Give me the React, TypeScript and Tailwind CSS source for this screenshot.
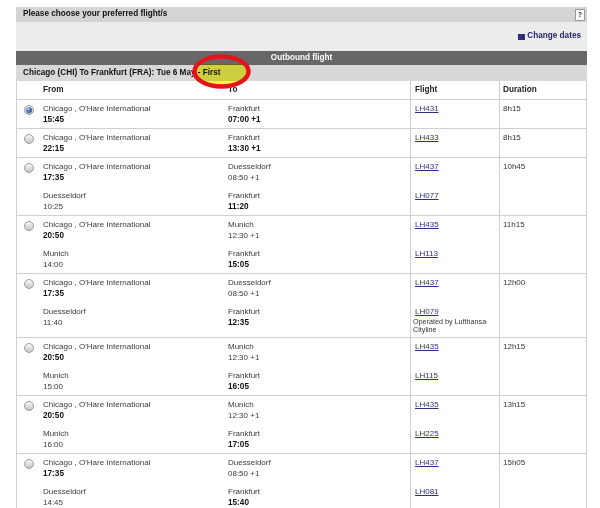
import React from "react";

type Seg = {
  from: string;
  dep: string;
  depBold?: boolean;
  to: string;
  arr: string;
  arrBold?: boolean;
  flight: string;
  operated?: string;
};

type Row = { selected?: boolean; segs: Seg[]; dur: string };

const CHI = "Chicago , O'Hare International";

const rows: Row[] = [
  {
    selected: true,
    segs: [{ from: CHI, dep: "15:45", depBold: true, to: "Frankfurt", arr: "07:00 +1", arrBold: true, flight: "LH431" }],
    dur: "8h15",
  },
  {
    segs: [{ from: CHI, dep: "22:15", depBold: true, to: "Frankfurt", arr: "13:30 +1", arrBold: true, flight: "LH433" }],
    dur: "8h15",
  },
  {
    segs: [
      { from: CHI, dep: "17:35", depBold: true, to: "Duesseldorf", arr: "08:50 +1", flight: "LH437" },
      { from: "Duesseldorf", dep: "10:25", to: "Frankfurt", arr: "11:20", arrBold: true, flight: "LH077" },
    ],
    dur: "10h45",
  },
  {
    segs: [
      { from: CHI, dep: "20:50", depBold: true, to: "Munich", arr: "12:30 +1", flight: "LH435" },
      { from: "Munich", dep: "14:00", to: "Frankfurt", arr: "15:05", arrBold: true, flight: "LH113" },
    ],
    dur: "11h15",
  },
  {
    segs: [
      { from: CHI, dep: "17:35", depBold: true, to: "Duesseldorf", arr: "08:50 +1", flight: "LH437" },
      {
        from: "Duesseldorf",
        dep: "11:40",
        to: "Frankfurt",
        arr: "12:35",
        arrBold: true,
        flight: "LH079",
        operated: "Operated by Lufthansa Cityline",
      },
    ],
    dur: "12h00",
  },
  {
    segs: [
      { from: CHI, dep: "20:50", depBold: true, to: "Munich", arr: "12:30 +1", flight: "LH435" },
      { from: "Munich", dep: "15:00", to: "Frankfurt", arr: "16:05", arrBold: true, flight: "LH115" },
    ],
    dur: "12h15",
  },
  {
    segs: [
      { from: CHI, dep: "20:50", depBold: true, to: "Munich", arr: "12:30 +1", flight: "LH435" },
      { from: "Munich", dep: "16:00", to: "Frankfurt", arr: "17:05", arrBold: true, flight: "LH225" },
    ],
    dur: "13h15",
  },
  {
    segs: [
      { from: CHI, dep: "17:35", depBold: true, to: "Duesseldorf", arr: "08:50 +1", flight: "LH437" },
      { from: "Duesseldorf", dep: "14:45", to: "Frankfurt", arr: "15:40", arrBold: true, flight: "LH081" },
    ],
    dur: "15h05",
  },
];

function Radio({ selected }: { selected?: boolean }) {
  return (
    <div className="flex h-[10px] w-[10px] items-center justify-center rounded-full border border-[#9c9c9c] bg-linear-to-b from-[#f7f7f7] to-[#c6c6c6]">
      {selected && (
        <div className="h-[6px] w-[6px] rounded-full bg-radial-[at_35%_30%] from-[#a9cdf3] via-[#3d6fb5] to-[#1b3f7a]" />
      )}
    </div>
  );
}

function TwoLine({ top, bottom, bold }: { top: string; bottom: string; bold?: boolean }) {
  return (
    <div className="leading-[11px]">
      <div className="text-[#3a3a3a]">{top}</div>
      <div className={bold ? "font-bold text-[8.2px] text-[#111]" : "text-[#3a3a3a]"}>{bottom}</div>
    </div>
  );
}

export default function App() {
  const grid = "grid grid-cols-[24px_185px_184px_89px_87px]";
  return (
    <div className="relative h-[508px] w-[600px] overflow-hidden bg-white font-['Liberation_Sans',Arial,sans-serif] text-[8px] text-[#333]">
      <div className="pl-[16px] pt-[7px]">
        <div className="w-[571px]">
          {/* Title bar */}
          <div className="flex h-[15px] items-center justify-between bg-[#d4d4d4] pl-[7px] pr-[2px]">
            <span className="text-[8.2px] font-bold text-[#111]">Please choose your preferred flight/s</span>
            <span className="flex h-[12px] w-[10px] items-center justify-center border border-[#9a9a9a] bg-white text-[7px] font-bold leading-none text-[#2e2e7a]">
              ?
            </span>
          </div>
          {/* Change dates area */}
          <div className="flex h-[29px] items-center justify-end bg-[#ececec] pr-[6px]">
            <span className="mr-[2px] h-[6px] w-[7px] bg-[#2e2e7a]" />
            <span className="text-[8.2px] font-bold text-[#23236b]">Change dates</span>
          </div>
          {/* Outbound flight bar */}
          <div className="flex h-[14px] items-center justify-center bg-[#676767] text-[8.2px] font-bold text-white">
            Outbound flight
          </div>
          {/* Sub header */}
          <div className="flex h-[16px] items-center bg-[#d8d8d8] pl-[7px] text-[8.2px] font-bold text-[#111]">
            Chicago (CHI) To Frankfurt (FRA): Tue 6 May - First
          </div>
          {/* Table */}
          <div className="border-x border-[#cfcfcf]">
            <div className={`${grid} h-[19px] border-b border-[#cfcfcf] text-[8.2px] font-bold text-[#222]`}>
              <div />
              <div className="flex items-center pl-[2px]">From</div>
              <div className="flex items-center pl-[2px]">To</div>
              <div className="flex items-center border-l border-[#cfcfcf] pl-[4px]">Flight</div>
              <div className="flex items-center border-l border-[#cfcfcf] pl-[3px]">Duration</div>
            </div>
            {rows.map((r, i) => (
              <div key={i} className={`${grid} border-b border-[#cfcfcf]`}>
                <div className="flex justify-center pt-[5px]">
                  <Radio selected={r.selected} />
                </div>
                <div className="flex flex-col gap-[7px] pb-[3px] pl-[2px] pt-[3px]">
                  {r.segs.map((s, j) => (
                    <TwoLine key={j} top={s.from} bottom={s.dep} bold={s.depBold} />
                  ))}
                </div>
                <div className="flex flex-col gap-[7px] pb-[3px] pl-[2px] pt-[3px]">
                  {r.segs.map((s, j) => (
                    <TwoLine key={j} top={s.to} bottom={s.arr} bold={s.arrBold} />
                  ))}
                </div>
                <div className="flex flex-col gap-[7px] border-l border-[#cfcfcf] pb-[3px] pl-[4px] pt-[3px]">
                  {r.segs.map((s, j) => (
                    <div key={j} className="min-h-[22px] leading-[11px]">
                      <div>
                        <span className="text-[#2f2f80] underline decoration-[#2f2f80]">{s.flight}</span>
                      </div>
                      {s.operated && (
                        <div className="-ml-[2px] w-[78px] pt-[1px] text-[7.2px] leading-[8px] text-[#333]">
                          {s.operated}
                        </div>
                      )}
                    </div>
                  ))}
                </div>
                <div className="border-l border-[#cfcfcf] pl-[3px] pt-[3px] leading-[11px] text-[#333]">{r.dur}</div>
              </div>
            ))}
          </div>
        </div>
      </div>

      {/* Yellow highlight */}
      <svg
        className="pointer-events-none absolute left-[190px] top-[52px] mix-blend-multiply"
        width="64"
        height="40"
        viewBox="0 0 64 40"
      >
        <defs>
          <clipPath id="hl">
            <rect x="0" y="12" width="64" height="30" />
          </clipPath>
        </defs>
        <ellipse cx="31.5" cy="19.5" rx="27" ry="15" fill="#f4f44a" clipPath="url(#hl)" />
      </svg>
      {/* Red ring */}
      <svg
        className="pointer-events-none absolute left-[190px] top-[52px]"
        width="64"
        height="40"
        viewBox="0 0 64 40"
      >
        <ellipse cx="31.5" cy="19.5" rx="27" ry="15" fill="none" stroke="#e3141c" strokeWidth="4.5" />
      </svg>
    </div>
  );
}
